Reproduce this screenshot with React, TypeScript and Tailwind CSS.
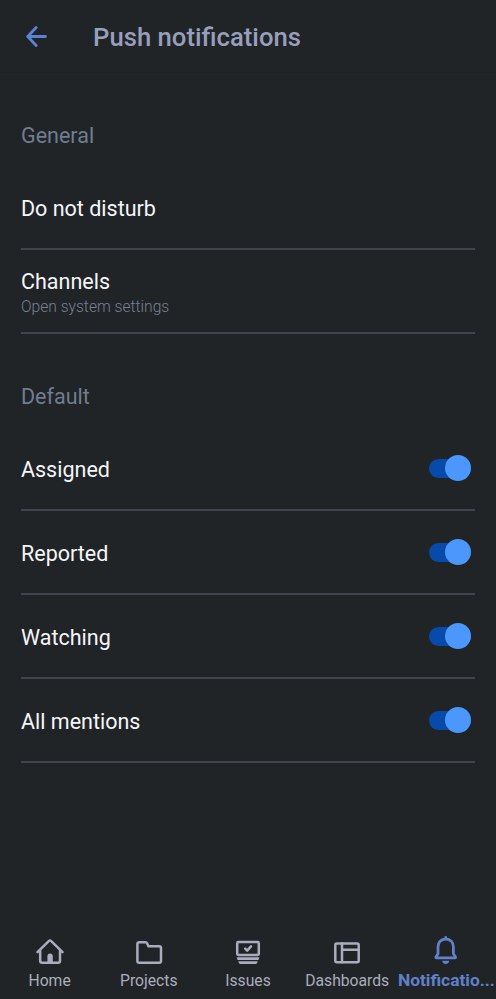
import React, { useState } from "react";

interface SettingRowProps {
  title: string;
  subtitle?: string;
  children?: React.ReactNode;
}

function SettingRow({ title, subtitle, children }: SettingRowProps) {
  return (
    <div className="flex h-[84px] items-center justify-between border-b-2 border-[#41444f] pr-1">
      <div className="pt-1">
        <div className="text-[21.5px] leading-7 text-[#f4f6f8]">{title}</div>
        {subtitle && (
          <div className="text-[15.6px] font-light leading-[22px] text-[#768194]">{subtitle}</div>
        )}
      </div>
      {children}
    </div>
  );
}

function Toggle({ label }: { label: string }) {
  const [on, setOn] = useState(true);

  return (
    <button
      role="switch"
      aria-checked={on}
      aria-label={label}
      onClick={() => setOn(!on)}
      className={`flex h-[19px] w-[42px] items-center rounded-full ${on ? "justify-end bg-[#084aa9]" : "justify-start bg-[#41444f]"}`}
    >
      <span className="h-[26px] w-[26px] shrink-0 rounded-full bg-[#4b97fb]" />
    </button>
  );
}

function SectionTitle({ children }: { children: React.ReactNode }) {
  return <h2 className="text-[21.5px] leading-7 text-[#6f7d90]">{children}</h2>;
}

const icons = {
  home: (
    <>
      <path d="M3.5 18.2 15 6.9Q16 6 17 6.9L28.5 18.2" />
      <path d="M6.2 16.5V26.8Q6.2 28.8 8.2 28.8H24Q26 28.8 26 26.8V16.5" />
      <path d="M13.4 28.5V22.4Q13.4 19.5 16.1 19.5T18.8 22.4V28.5Z" fill="currentColor" stroke="none" />
    </>
  ),
  projects: (
    <path d="M4.4 10Q4.4 8.2 6.2 8.2H12.5Q13.6 8.2 14.1 9.2L15.4 12.2H26.2Q28 12.2 28 14V27Q28 28.8 26.2 28.8H6.2Q4.4 28.8 4.4 27Z" />
  ),
  issues: (
    <>
      <rect x="5.2" y="8" width="21.6" height="13" rx="1.2" />
      <path d="M13.2 14.6 15.2 16.6 19 12.4" />
      <path d="M4.6 23.2H27.4L26.4 26H5.6Z M6.2 27.2H25.8L24.9 29.3Q24.6 30 23.8 30H8.2Q7.4 30 7.1 29.3Z" fill="currentColor" stroke="none" />
    </>
  ),
  dashboards: (
    <>
      <rect x="4.3" y="9.4" width="23.4" height="18.8" rx="1.5" />
      <path d="M11 9.4V28.2M11 15.8H27.6" />
    </>
  ),
  notifications: (
    <>
      <path d="M15.7 3.4V4.6M8 19.8V12.9C8 8.2 11 5 15.7 5S23.4 8.2 23.4 12.9V19.8L25.5 23Q25.9 23.8 25 23.8H6.4Q5.5 23.8 5.9 23Z" strokeWidth="2.8" />
      <path d="M12.1 26.8H19.3Q18.4 30 15.7 30T12.1 26.8Z" fill="currentColor" stroke="none" />
    </>
  ),
};

const tabs: { key: keyof typeof icons; label: string }[] = [
  { key: "home", label: "Home" },
  { key: "projects", label: "Projects" },
  { key: "issues", label: "Issues" },
  { key: "dashboards", label: "Dashboards" },
  { key: "notifications", label: "Notificatio..." },
];

export default function App() {
  return (
    <div className="flex h-[999px] w-full flex-col overflow-hidden bg-[#212427] font-[Roboto,'Liberation_Sans',sans-serif]">
      {/* Header */}
      <header className="flex h-[73px] shrink-0 items-center border-b border-[#1e2124] pl-[25px]">
        <button aria-label="Back" className="text-[#5d82d1]">
          <svg width="24" height="24" viewBox="0 0 24 24" fill="none" stroke="currentColor" strokeWidth="2.8" strokeLinecap="round" strokeLinejoin="round">
            <path d="M11.2 3.5 2.7 12.5 11.2 21.5M3 12.5H20.5" />
          </svg>
        </button>
        <h1 className="ml-11 pt-0.5 text-[25.7px] font-medium leading-8 text-[#979fbd]">Push notifications</h1>
      </header>

      {/* Settings */}
      <main className="flex-1 px-[21px] pt-[49px]">
        <SectionTitle>General</SectionTitle>
        <div className="mt-4">
          <SettingRow title="Do not disturb" />
          <SettingRow title="Channels" subtitle="Open system settings" />
        </div>

        <div className="mt-[49px]">
          <SectionTitle>Default</SectionTitle>
        </div>
        <div className="mt-4">
          {["Assigned", "Reported", "Watching", "All mentions"].map((title) => (
            <SettingRow key={title} title={title}>
              <Toggle label={title} />
            </SettingRow>
          ))}
        </div>
      </main>

      {/* Bottom navigation */}
      <nav className="grid h-[65px] shrink-0 grid-cols-5">
        {tabs.map(({ key, label }) => (
          <button
            key={key}
            className={`flex min-w-0 flex-col items-center ${
              key === "notifications" ? "font-bold text-[#6080c9]" : "text-[#a9adbd]"
            }`}
          >
            <svg width="32" height="32" viewBox="0 0 32 32" fill="none" stroke="currentColor" strokeWidth="2.5" strokeLinecap="round" strokeLinejoin="round" className="shrink-0">
              {icons[key]}
            </svg>
            <span className={`whitespace-nowrap text-center leading-5 ${key === "notifications" ? "mt-1 text-[17.4px]" : "mt-[5px] text-[15.7px]"}`}>
              {label}
            </span>
          </button>
        ))}
      </nav>
    </div>
  );
}
